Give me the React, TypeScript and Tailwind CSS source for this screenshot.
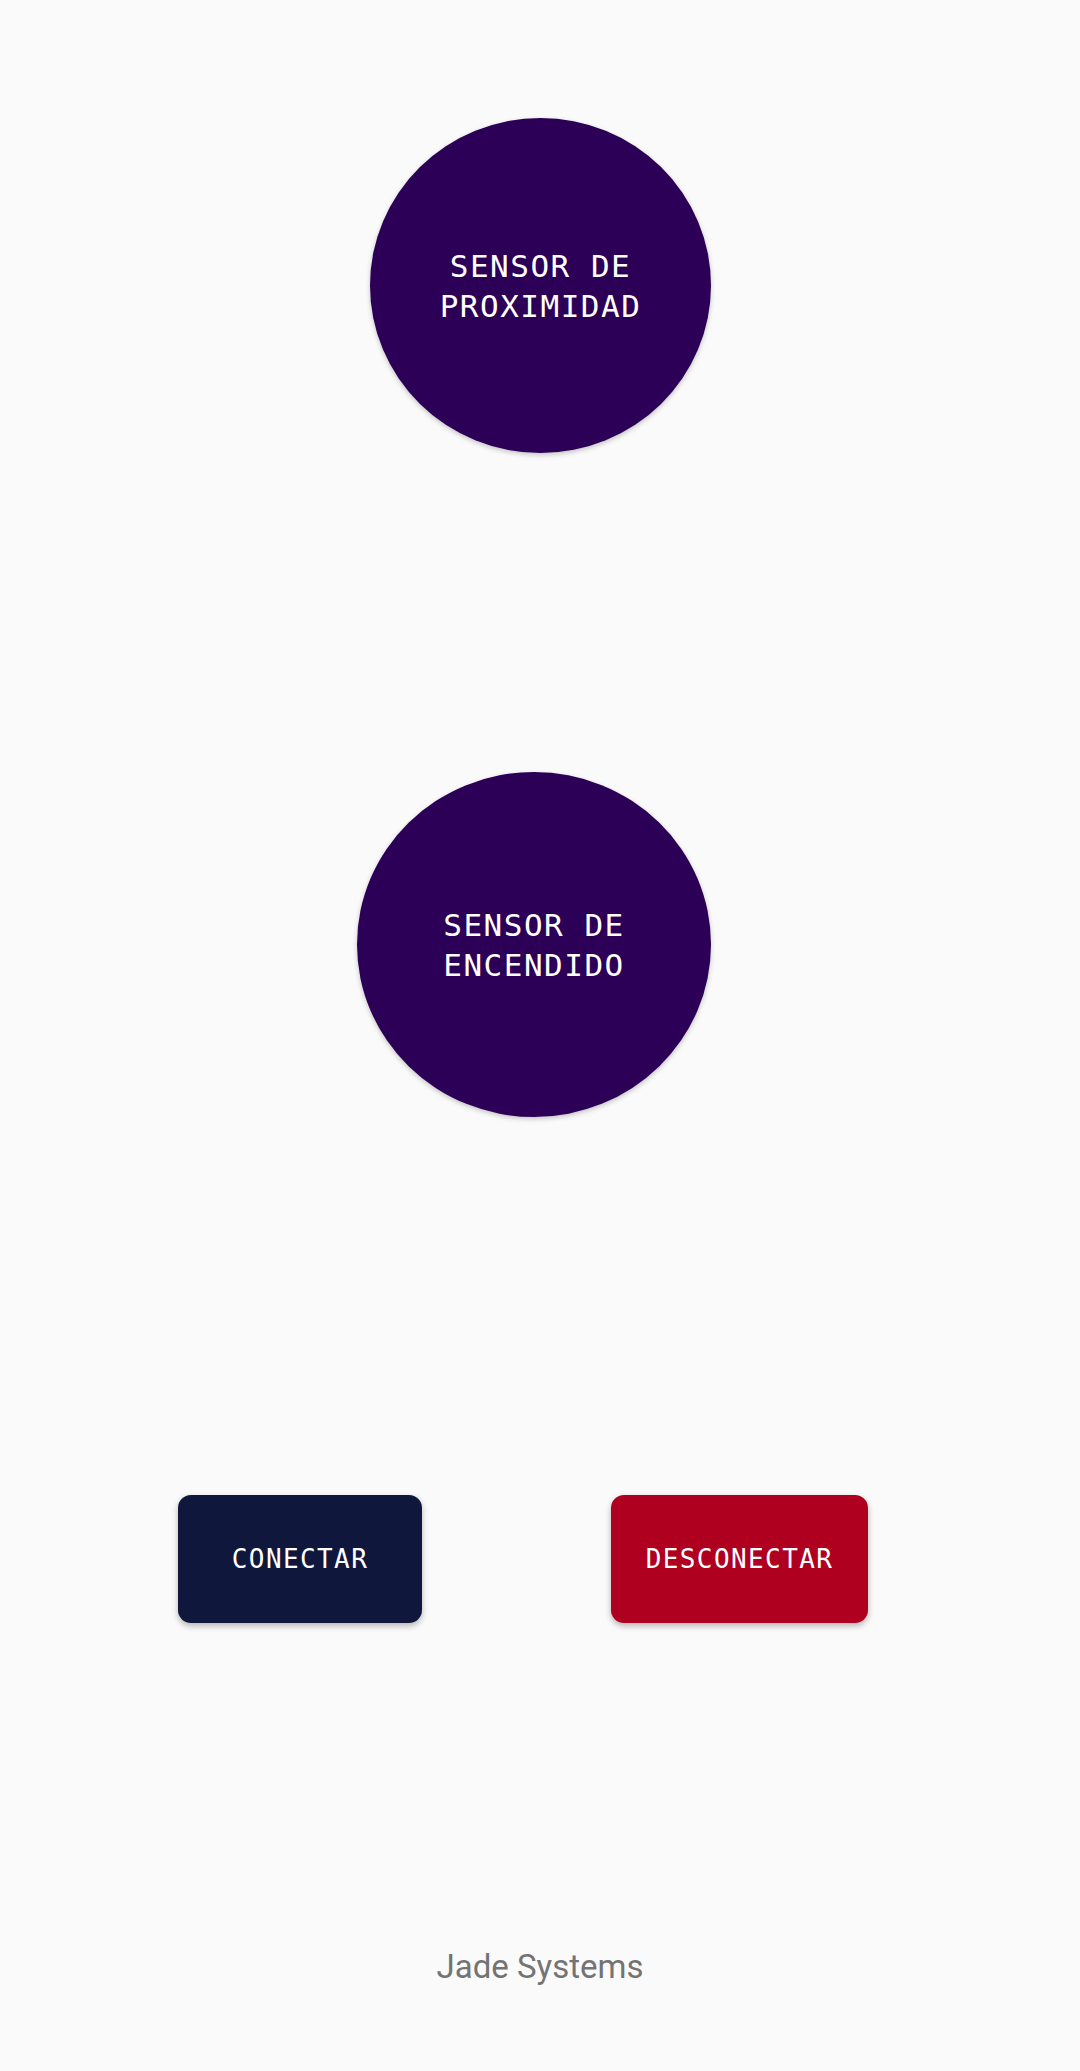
import React from "react";

const circle =
  "rounded-[50%] bg-[#2d0057] shadow-[0_2px_5px_rgba(0,0,0,0.22)] flex items-center justify-center text-center text-white text-[31px] leading-[40px] tracking-[1.5px] font-['DejaVu_Sans_Mono','Liberation_Mono',monospace]";

const button =
  "h-[128px] rounded-[13px] shadow-[0_3px_6px_rgba(0,0,0,0.28)] flex items-center justify-center text-white text-[26px] tracking-[1.4px] font-['DejaVu_Sans_Mono','Liberation_Mono',monospace]";

export default function App() {
  return (
    <div className="min-h-[2071px] w-[1080px] bg-[#fafafa] flex flex-col">
      <div className={`ml-[370px] mt-[118px] w-[341px] h-[335px] ${circle}`}>
        <span>
          SENSOR DE
          <br />
          PROXIMIDAD
        </span>
      </div>

      <div className={`ml-[357px] mt-[319px] w-[354px] h-[345px] ${circle}`}>
        <span>
          SENSOR DE
          <br />
          ENCENDIDO
        </span>
      </div>

      <div className="mt-[378px] flex">
        <div className={`ml-[178px] w-[244px] bg-[#0f173d] ${button}`}>CONECTAR</div>
        <div className={`ml-[189px] w-[257px] bg-[#b00020] ${button}`}>DESCONECTAR</div>
      </div>

      <div className="mt-[325px] text-center text-[33px] leading-[38px] text-[#737373] font-['Roboto','Noto_Sans',sans-serif]">
        Jade Systems
      </div>
    </div>
  );
}
